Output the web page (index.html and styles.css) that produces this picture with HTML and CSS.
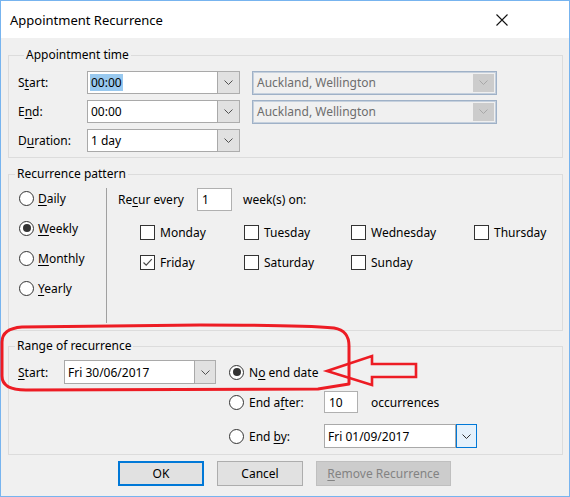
FILE: index.html
```html
<!DOCTYPE html>
<html lang="en">
<head>
<meta charset="utf-8">
<title>Appointment Recurrence</title>
<link rel="stylesheet" href="styles.css">
</head>
<body>
<div class="window">
  <div class="titlebar">
    <span class="title">Appointment Recurrence</span>
    <svg class="close" width="12" height="12" viewBox="0 0 12 12"><path d="M0.5 0.5 L11.5 11.5 M11.5 0.5 L0.5 11.5" stroke="#111" stroke-width="1.1" fill="none"/></svg>
  </div>

  <div class="body">
    <fieldset class="group group-time">
      <legend>Appointment time</legend>
      <div class="time-grid">
        <span class="label">S<u>t</u>art:</span>
        <div class="combo combo-time">
          <div class="combo-field"><span class="selected">00:00</span></div>
          <div class="combo-btn"><svg width="9" height="5" viewBox="0 0 9 5"><path d="M0.5 0.5 L4.5 4.5 L8.5 0.5" stroke="#505050" fill="none"/></svg></div>
        </div>
        <div class="zone">
          <span>Auckland, Wellington</span>
          <div class="zone-btn"><svg width="9" height="5" viewBox="0 0 9 5"><path d="M0.5 0.5 L4.5 4.5 L8.5 0.5" stroke="#a8a8a8" fill="none"/></svg></div>
        </div>

        <span class="label">E<u>n</u>d:</span>
        <div class="combo combo-time">
          <div class="combo-field">00:00</div>
          <div class="combo-btn"><svg width="9" height="5" viewBox="0 0 9 5"><path d="M0.5 0.5 L4.5 4.5 L8.5 0.5" stroke="#505050" fill="none"/></svg></div>
        </div>
        <div class="zone">
          <span>Auckland, Wellington</span>
          <div class="zone-btn"><svg width="9" height="5" viewBox="0 0 9 5"><path d="M0.5 0.5 L4.5 4.5 L8.5 0.5" stroke="#a8a8a8" fill="none"/></svg></div>
        </div>

        <span class="label">D<u>u</u>ration:</span>
        <div class="combo combo-time">
          <div class="combo-field">1 day</div>
          <div class="combo-btn"><svg width="9" height="5" viewBox="0 0 9 5"><path d="M0.5 0.5 L4.5 4.5 L8.5 0.5" stroke="#505050" fill="none"/></svg></div>
        </div>
      </div>
    </fieldset>

    <fieldset class="group group-pattern">
      <legend>Recurrence pattern</legend>
      <div class="pattern">
        <div class="freq">
          <div class="radio-row"><span class="radio"></span><span><u>D</u>aily</span></div>
          <div class="radio-row"><span class="radio on"></span><span><u>W</u>eekly</span></div>
          <div class="radio-row"><span class="radio"></span><span><u>M</u>onthly</span></div>
          <div class="radio-row"><span class="radio"></span><span><u>Y</u>early</span></div>
        </div>
        <div class="weekly">
          <div class="recur-row">
            <span class="recur-label">Re<u>c</u>ur every</span>
            <div class="textbox tb-every">1</div>
            <span class="recur-unit">week(s) on:</span>
          </div>
          <div class="days">
            <div class="check-row"><span class="check"></span><span>Monday</span></div>
            <div class="check-row"><span class="check"></span><span>Tuesday</span></div>
            <div class="check-row"><span class="check"></span><span>Wednesday</span></div>
            <div class="check-row"><span class="check"></span><span>Thursday</span></div>
            <div class="check-row"><span class="check"><svg width="13" height="13" viewBox="0 0 13 13"><path d="M2.5 6.5 L5.2 9.2 L10.8 3.2" stroke="#4a4a4a" stroke-width="1.2" fill="none"/></svg></span><span>Friday</span></div>
            <div class="check-row"><span class="check"></span><span>Saturday</span></div>
            <div class="check-row"><span class="check"></span><span>Sunday</span></div>
          </div>
        </div>
      </div>
    </fieldset>

    <fieldset class="group group-range">
      <legend>Range of recurrence</legend>
      <div class="range">
        <div class="range-start">
          <span class="range-label"><u>S</u>tart:</span>
          <div class="combo combo-date">
            <div class="combo-field">Fri 30/06/2017</div>
            <div class="combo-btn"><svg width="9" height="5" viewBox="0 0 9 5"><path d="M0.5 0.5 L4.5 4.5 L8.5 0.5" stroke="#505050" fill="none"/></svg></div>
          </div>
        </div>
        <div class="range-end">
          <div class="end-row">
            <span class="radio on"></span><span>N<u>o</u> end date</span>
          </div>
          <div class="end-row">
            <span class="radio"></span><span class="end-label">End a<u>f</u>ter:</span>
            <div class="textbox tb-count">10</div>
            <span class="end-unit">occurrences</span>
          </div>
          <div class="end-row">
            <span class="radio"></span><span class="end-label">End <u>b</u>y:</span>
            <div class="combo combo-enddate">
              <div class="combo-field">Fri 01/09/2017</div>
              <div class="combo-btn hot"><svg width="9" height="5" viewBox="0 0 9 5"><path d="M0.5 0.5 L4.5 4.5 L8.5 0.5" stroke="#303030" fill="none"/></svg></div>
            </div>
          </div>
        </div>
      </div>
    </fieldset>

    <div class="buttons">
      <button class="btn btn-default">OK</button>
      <button class="btn">Cancel</button>
      <button class="btn btn-wide" disabled><u>R</u>emove Recurrence</button>
    </div>
  </div>

  <!-- hand-drawn red markup on top of the dialog -->
  <svg class="markup" width="570" height="497" viewBox="0 0 570 497">
    <path d="M349 384 L349 346 C349 336 345 330 334 328 C300 325 250 325 200 325 L22 327 C9 328 2 333 2 342 L2 376 C2 385 10 390 26 390 L318 389 Z" fill="none" stroke="#ed1c24" stroke-width="3" stroke-linejoin="round"/>
    <polygon points="327,371 372,356 372,364 416,364 416,377 372,377 372,385" fill="none" stroke="#ed1c24" stroke-width="2.6"/>
  </svg>
</div>
</body>
</html>
```

FILE: styles.css
```css
* {
  box-sizing: border-box;
}

html, body {
  margin: 0;
  padding: 0;
  background: #f0f0f0;
}

body {
  font-family: "Noto Sans", "Open Sans", sans-serif;
  font-size: 12px;
  color: #000;
}

u {
  text-decoration-thickness: 1px;
  text-underline-offset: 2px;
}

.window {
  position: relative;
  width: 570px;
  height: 497px;
  border: 1px solid #77b4ef;
  background: #f0f0f0;
  display: flex;
  flex-direction: column;
}

/* title bar */
.titlebar {
  height: 37px;
  background: #fff;
  display: flex;
  align-items: center;
  padding-left: 9px;
  flex: none;
}

.title {
  font-size: 13px;
  color: #000;
}

.close {
  margin-left: auto;
  margin-right: 61px;
}

.body {
  padding: 0 6px 0 7px;
  display: flex;
  flex-direction: column;
}

/* group boxes */
.group {
  margin: 0;
  padding: 0;
  border: 1px solid #dcdcdc;
  min-inline-size: 0;
}

.group legend {
  margin-left: 6px;
  padding: 0 2px;
  line-height: 16px;
  font-size: 12px;
}

.group-time {
  margin-top: 9px;
  padding: 8px 0 5px 9px;
}

.group-pattern {
  margin-top: 8px;
  padding: 6px 0 7px 0;
}

.group-range {
  margin-top: 7px;
  padding: 6px 0 6px 0;
}

/* appointment time */
.time-grid {
  display: grid;
  grid-template-columns: 57px 153px 245px;
  grid-auto-rows: 23px;
  row-gap: 6px;
  column-gap: 12px;
  align-items: center;
}

.combo {
  display: flex;
  height: 23px;
}

.combo-field {
  flex: 1;
  min-width: 0;
  background: #fff;
  border: 1px solid #a9a9a9;
  display: flex;
  align-items: center;
  padding-left: 3px;
  white-space: nowrap;
}

.combo-btn {
  flex: none;
  width: 22px;
  background: #e1e1e1;
  border: 1px solid #adadad;
  border-left: none;
  display: flex;
  align-items: center;
  justify-content: center;
}

.combo-btn.hot {
  background: #e5f1fb;
  border: 1px solid #0078d7;
}

.combo-time {
  width: 153px;
}

.selected {
  background: #99c9ef;
  line-height: 17px;
  padding: 0 1px;
  margin-left: -1px;
}

.zone {
  height: 24px;
  border: 1px solid #9fb1c7;
  box-shadow: inset 0 0 0 1px #c5d0dd;
  background: #f0f0f0;
  color: #6d6d6d;
  display: flex;
  align-items: center;
  padding: 2px 2px 2px 4px;
}

.zone span {
  flex: 1;
}

.zone-btn {
  width: 21px;
  align-self: stretch;
  background: #cccccc;
  display: flex;
  align-items: center;
  justify-content: center;
}

/* recurrence pattern */
.pattern {
  display: flex;
  height: 135px;
}

.freq {
  width: 97px;
  padding-left: 10px;
  display: flex;
  flex-direction: column;
  gap: 10px;
}

.radio-row {
  height: 20px;
  display: flex;
  align-items: center;
  gap: 4px;
}

.radio {
  flex: none;
  width: 15px;
  height: 15px;
  border: 1px solid #333;
  border-radius: 50%;
  background: #fff;
  display: flex;
  align-items: center;
  justify-content: center;
}

.radio.on::after {
  content: "";
  width: 8px;
  height: 8px;
  border-radius: 50%;
  background: #333;
}

.weekly {
  flex: 1;
  border-left: 1px solid #a0a0a0;
  padding-left: 11px;
}

.recur-row {
  height: 23px;
  display: flex;
  align-items: center;
}

.recur-label {
  width: 79px;
}

.textbox {
  height: 23px;
  background: #fff;
  border: 1px solid #b0b0b0;
  display: flex;
  align-items: center;
  padding-left: 4px;
}

.tb-every {
  width: 35px;
}

.recur-unit {
  margin-left: 11px;
}

.days {
  margin-top: 10px;
  margin-left: 22px;
  display: grid;
  grid-template-columns: 104px 107px 123px auto;
  grid-auto-rows: 22px;
  row-gap: 8px;
}

.check-row {
  display: flex;
  align-items: center;
  gap: 5px;
}

.check {
  flex: none;
  width: 15px;
  height: 15px;
  border: 1px solid #333;
  background: #fff;
  display: flex;
  align-items: center;
  justify-content: center;
}

/* range of recurrence */
.range {
  display: flex;
}

.range-start {
  padding-left: 9px;
  height: 24px;
  display: flex;
  align-items: center;
}

.range-label {
  width: 46px;
}

.combo-date {
  width: 152px;
  height: 24px;
}

.combo-date .combo-btn {
  width: 21px;
}

.range-end {
  margin-left: 13px;
  display: flex;
  flex-direction: column;
}

.end-row {
  height: 24px;
  display: flex;
  align-items: center;
  gap: 5px;
}

.end-row + .end-row {
  margin-top: 6px;
}

.end-row:last-child {
  margin-top: 10px;
}

.end-label {
  width: 70px;
}

.tb-count {
  width: 34px;
  height: 22px;
}

.end-unit {
  margin-left: 8px;
}

.combo-enddate {
  width: 153px;
  height: 24px;
}

.combo-enddate .combo-btn {
  width: 21px;
}

/* dialog buttons */
.buttons {
  margin-top: 6px;
  padding-left: 110px;
  display: flex;
  gap: 13px;
}

.btn {
  font-family: inherit;
  font-size: 12px;
  color: #000;
  height: 25px;
  width: 86px;
  padding: 0;
  background: #e1e1e1;
  border: 1px solid #adadad;
}

.btn-default {
  border: 2px solid #0078d7;
}

.btn-wide {
  width: 135px;
}

.btn[disabled] {
  background: #cccccc;
  border-color: #bfbfbf;
  color: #838383;
}

/* markup overlay */
.markup {
  position: absolute;
  left: -1px;
  top: -1px;
  pointer-events: none;
}
```
